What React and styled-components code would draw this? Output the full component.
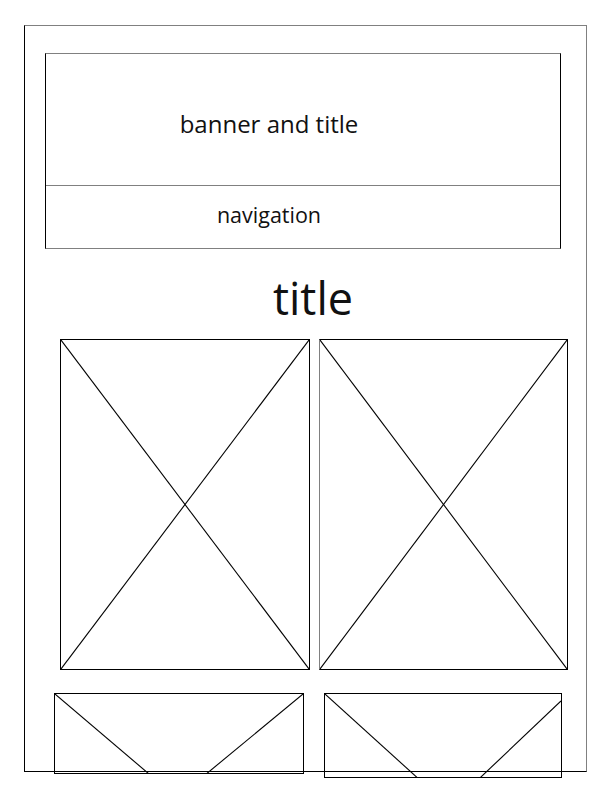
import React from "react";
import styled, { createGlobalStyle } from "styled-components";

const Global = createGlobalStyle`
  html, body { margin: 0; padding: 0; background: #fff; }
  body { font-family: "Open Sans", "Noto Sans", sans-serif; color: #111; }
  * { box-sizing: border-box; }
`;

const GRAY = "#808080";
const INK = "#000";

const Screen = styled.div`
  min-height: 792px;
  width: 612px;
  padding: 25px 0 0 24px;
  background: #fff;
`;

const Page = styled.div`
  width: 563px;
  height: 747px;
  border: 1px solid ${INK};
  border-top-color: ${GRAY};
  border-right-color: ${GRAY};
  display: flex;
  flex-direction: column;
  align-items: flex-start;

  & > * {
    flex: none;
  }
`;

const Banner = styled.header`
  margin: 27px 0 0 20px;
  width: 516px;
  display: flex;
  flex-direction: column;
  border: 1px solid ${INK};
  border-top-color: ${GRAY};
  border-bottom-color: ${GRAY};
`;

const BannerTitle = styled.div`
  height: 132px;
  border-bottom: 1px solid ${GRAY};
  display: flex;
  justify-content: center;
  align-items: flex-start;
  padding: 54px 68px 0 0;
  font-size: 24px;
  line-height: 32px;
`;

const Nav = styled.nav`
  height: 62px;
  display: flex;
  justify-content: center;
  align-items: flex-start;
  padding: 15px 68px 0 0;
  font-size: 21.5px;
  line-height: 28px;
`;

const Title = styled.h1`
  margin: 24px 0 0 0;
  width: 100%;
  padding-left: 15px;
  text-align: center;
  font-weight: 400;
  font-size: 45px;
  line-height: 50px;
`;

const Row = styled.div`
  display: flex;
  align-items: flex-start;
  margin: ${(p) => p.$mt}px 0 0 ${(p) => p.$ml}px;
  gap: ${(p) => p.$gap}px;
`;

const Placeholder = styled.div`
  width: ${(p) => p.$w}px;
  height: ${(p) => p.$h}px;
  border: 1px solid ${INK};
  border-left-color: ${(p) => (p.$softLeft ? GRAY : INK)};
  overflow: hidden;
  flex: none;

  svg {
    display: block;
    width: 100%;
    height: 100%;
  }
`;

function FullCross() {
  return (
    <svg viewBox="0 0 100 100" preserveAspectRatio="none">
      <line x1="0" y1="0" x2="100" y2="100" stroke={INK} strokeWidth="1.1" vectorEffect="non-scaling-stroke" />
      <line x1="100" y1="0" x2="0" y2="100" stroke={INK} strokeWidth="1.1" vectorEffect="non-scaling-stroke" />
    </svg>
  );
}

function ClippedCross({ w, h, a, b }) {
  return (
    <svg viewBox={`0 0 ${w} ${h}`} preserveAspectRatio="none">
      <line x1={a[0]} y1={a[1]} x2={a[2]} y2={a[3]} stroke={INK} strokeWidth="1.1" />
      <line x1={b[0]} y1={b[1]} x2={b[2]} y2={b[3]} stroke={INK} strokeWidth="1.1" />
    </svg>
  );
}

export default function App() {
  return (
    <>
      <Global />
      <Screen>
        <Page>
          <Banner>
            <BannerTitle>banner and title</BannerTitle>
            <Nav>navigation</Nav>
          </Banner>
          <Title>title</Title>
          <Row $mt={16} $ml={35} $gap={9}>
            <Placeholder $w={250} $h={331}>
              <FullCross />
            </Placeholder>
            <Placeholder $w={249} $h={331} $softLeft>
              <FullCross />
            </Placeholder>
          </Row>
          <Row $mt={23} $ml={29} $gap={20}>
            <Placeholder $w={250} $h={81}>
              <ClippedCross w={248} h={79} a={[0, 0, 248, 211]} b={[248, 0, 0, 205]} />
            </Placeholder>
            <Placeholder $w={238} $h={85}>
              <ClippedCross w={236} h={83} a={[0, 0, 236, 214]} b={[236, 7, 0, 231]} />
            </Placeholder>
          </Row>
        </Page>
      </Screen>
    </>
  );
}
